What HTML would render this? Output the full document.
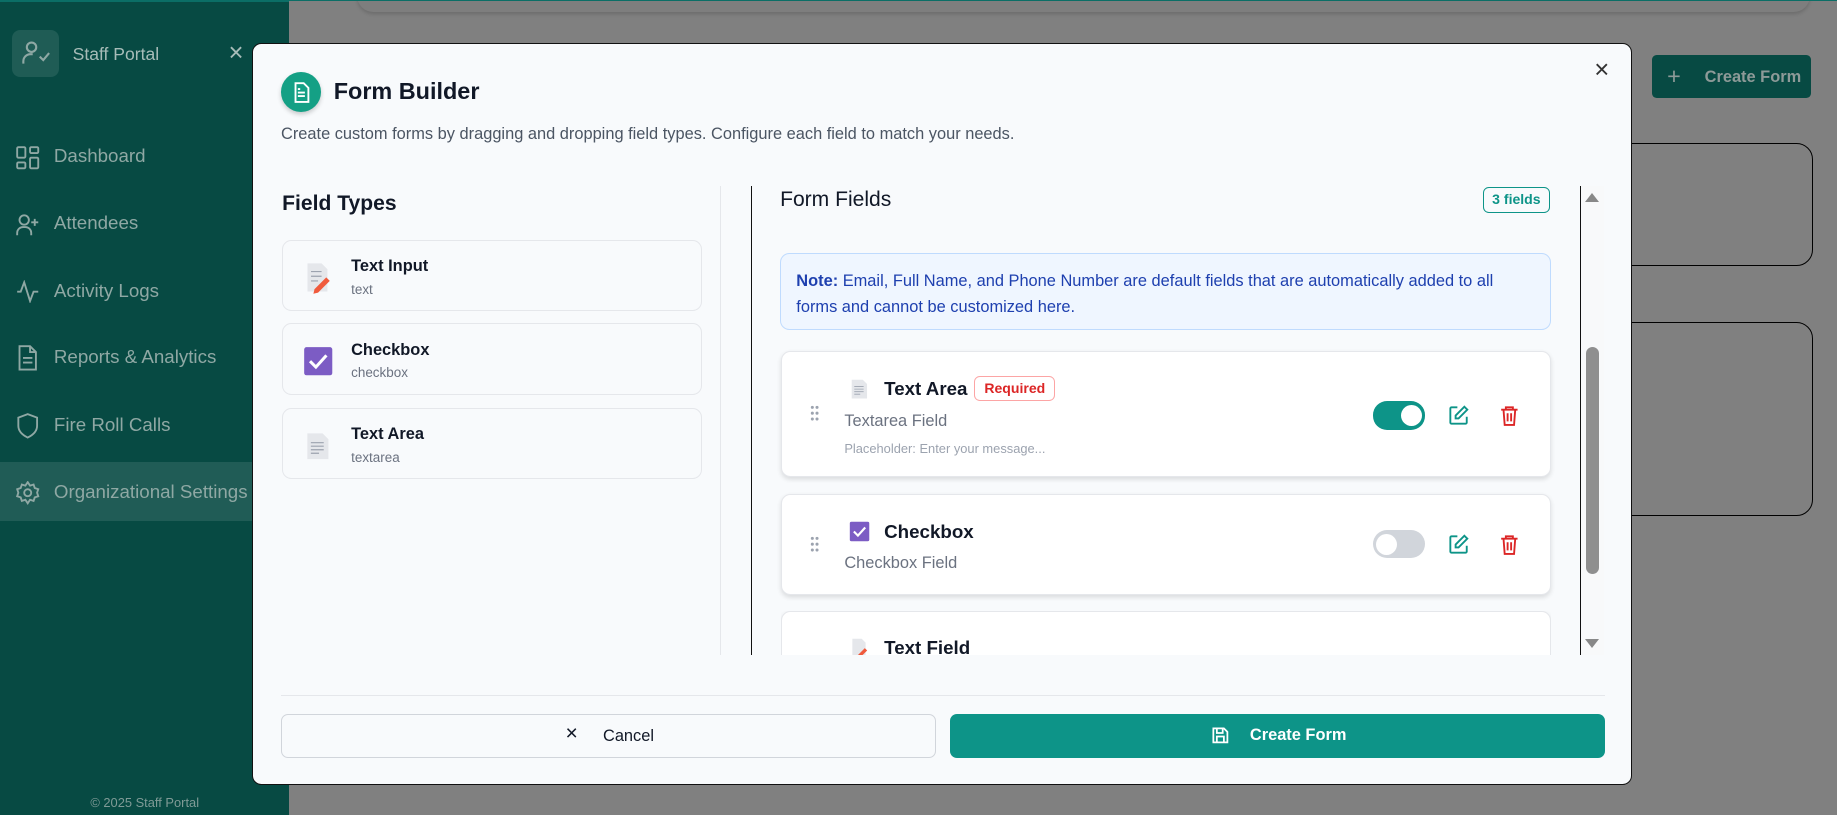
<!DOCTYPE html>
<html><head><meta charset="utf-8"><style>
html,body{margin:0;padding:0;overflow:hidden}
body{width:1837px;height:815px;background:#808080;font-family:"Liberation Sans",sans-serif}
#w{zoom:1.17156;width:1568px;height:696px;position:relative;overflow:hidden}
.a{position:absolute}
.side{left:0;top:0;width:247px;height:696px;background:#074a43;border-top:2px solid #0b6e66;box-sizing:border-box}
.nav{position:absolute;left:46px;color:#8fa8a4;font-size:16px}
.ni{position:absolute;left:14px}
.bgcard{border:1px solid #000;border-radius:14px;background:#808080}
.modal{left:215px;top:37px;width:1178px;height:633px;background:#f8fafc;border:1px solid #111;border-radius:8px;box-sizing:border-box}
.ft{position:absolute;left:25px;width:358px;height:61px;border:1px solid #e5e7eb;border-radius:8px;background:#f8fafc;box-sizing:border-box}
.ft b{position:absolute;left:58px;top:14px;font-size:14px;color:#111827}
.ft span{position:absolute;left:58px;top:35px;font-size:11.5px;color:#6b7280}
.fc{position:absolute;left:451px;width:657px;background:#fff;border:1px solid #e5e7eb;border-radius:8px;box-shadow:0 2px 4px rgba(0,0,0,.12);box-sizing:border-box}
.tog{position:absolute;width:45px;height:24px;border-radius:12px}
.knob{position:absolute;top:3px;width:18px;height:18px;border-radius:50%;background:#fff}
</style></head><body><div id="w">
<!-- background page -->
<div class="a" style="left:305px;top:-20px;width:1240px;height:30px;border-radius:14px;background:#7e7e7e;box-shadow:0 2px 3px rgba(0,0,0,.15)"></div>
<div class="a" style="left:247px;top:0;width:1321px;height:1px;background:#0b6e66"></div>
<div class="a" style="left:1410px;top:47px;width:136px;height:37px;background:#074a43;border-radius:4px;color:#8d9a98;font-size:14px;font-weight:bold">
<span class="a" style="left:13px;top:7px;font-size:20px;font-weight:normal">+</span><span class="a" style="left:45px;top:11px">Create Form</span></div>
<div class="a bgcard" style="left:1330px;top:122px;width:216px;height:103px"></div>
<div class="a bgcard" style="left:1330px;top:275px;width:216px;height:164px"></div>
<!-- sidebar -->
<div class="a side">
<div class="a" style="left:10px;top:24px;width:40px;height:40px;border-radius:7px;background:#1f5c55"></div>
<svg class="a" style="left:18px;top:32px" width="26" height="24" viewBox="0 0 26 24" fill="none" stroke="#8fa8a4" stroke-width="1.8"><circle cx="9" cy="7" r="4"/><path d="M2 21v-2a6 6 0 0 1 6-6h2M16 15l3 3 5-6"/></svg>
<div class="a" style="left:62px;top:36px;color:#a7bcb8;font-size:15px">Staff Portal</div>
<div class="a" style="left:195px;top:32px;color:#a7bcb8;font-size:22px">×</div>
<div class="a" style="left:0;top:393px;width:247px;height:50px;background:#205c56"></div>
<svg class="ni" style="top:123px" width="20" height="20" viewBox="0 0 20 20" fill="none" stroke="#8fa8a4" stroke-width="1.6"><rect x="1" y="1" width="7" height="9" rx="1"/><rect x="12" y="1" width="7" height="5" rx="1"/><rect x="12" y="10" width="7" height="9" rx="1"/><rect x="1" y="14" width="7" height="5" rx="1"/></svg>
<div class="nav" style="top:122px">Dashboard</div>
<svg class="ni" style="top:180px" width="20" height="20" viewBox="0 0 20 20" fill="none" stroke="#8fa8a4" stroke-width="1.6"><circle cx="7" cy="6" r="4"/><path d="M1 19v-2a5 5 0 0 1 5-5h2a5 5 0 0 1 5 5v2M16 5v6M13 8h6"/></svg>
<div class="nav" style="top:179px">Attendees</div>
<svg class="ni" style="top:237px" width="20" height="20" viewBox="0 0 20 20" fill="none" stroke="#8fa8a4" stroke-width="1.6"><path d="M1 10h3l3-8 5 16 3-8h4"/></svg>
<div class="nav" style="top:237px">Activity Logs</div>
<svg class="ni" style="top:293px" width="20" height="22" viewBox="0 0 20 22" fill="none" stroke="#8fa8a4" stroke-width="1.6"><path d="M3 1h9l5 5v15H3zM12 1v5h5M6 11h8M6 15h8"/></svg>
<div class="nav" style="top:294px">Reports &amp; Analytics</div>
<svg class="ni" style="top:351px" width="20" height="22" viewBox="0 0 20 22" fill="none" stroke="#8fa8a4" stroke-width="1.6"><path d="M10 1l8 3v7c0 5-4 8-8 10-4-2-8-5-8-10V4z"/></svg>
<div class="nav" style="top:352px">Fire Roll Calls</div>
<svg class="ni" style="top:409px" width="20" height="20" viewBox="0 0 20 20" fill="none" stroke="#8fa8a4" stroke-width="1.6"><circle cx="10" cy="10" r="3"/><path d="M10 1l2 3 3-1 1 3 3 1-1 3 1 3-3 1-1 3-3-1-2 3-2-3-3 1-1-3-3-1 1-3-1-3 3-1 1-3 3 1z"/></svg>
<div class="nav" style="top:409px;white-space:nowrap">Organizational Settings</div>
<div class="a" style="left:0;width:247px;top:677px;text-align:center;color:#7f9a96;font-size:11px">© 2025 Staff Portal</div>
</div>
<!-- modal -->
<div class="a modal">
<div class="a" style="left:1145px;top:10px;font-size:22px;color:#333">×</div>
<div class="a" style="left:24px;top:24px;width:34px;height:34px;border-radius:50%;background:#14a085;box-shadow:0 2px 4px rgba(0,0,0,.2)"></div>
<svg class="a" style="left:33px;top:32px" width="16" height="18" viewBox="0 0 16 18" fill="none" stroke="#fff" stroke-width="1.6"><path d="M3 1h7l4 4v12H3zM5 9h6M5 12h6M5 6h2"/></svg>
<div class="a" style="left:69px;top:29px;font-size:20px;font-weight:bold;color:#111827">Form Builder</div>
<div class="a" style="left:24px;top:69px;font-size:14px;color:#4b5563">Create custom forms by dragging and dropping field types. Configure each field to match your needs.</div>
<div class="a" style="left:25px;top:126px;font-size:18px;font-weight:bold;color:#111827">Field Types</div>
<div class="ft" style="top:167px"><svg class="a" style="left:18px;top:17px" width="24" height="28" viewBox="0 0 24 28"><path d="M3 2h12l5 5v19H3z" fill="#e5e7eb"/><path d="M6 9h9M6 13h9M6 17h6" stroke="#9ca3af"/><path d="M9 24l10-10 3 3-10 10-4 1z" fill="#f05a3c"/></svg><b>Text Input</b><span>text</span></div>
<div class="ft" style="top:238px"><svg class="a" style="left:17px;top:19px" width="26" height="26" viewBox="0 0 26 26"><rect x="1" y="1" width="24" height="24" rx="2" fill="#7c5cc4"/><path d="M6 13l5 5 9-10" stroke="#fff" stroke-width="2.6" fill="none"/></svg><b>Checkbox</b><span>checkbox</span></div>
<div class="ft" style="top:310px"><svg class="a" style="left:19px;top:19px" width="22" height="26" viewBox="0 0 22 26"><path d="M2 2h13l5 5v17H2z" fill="#e5e7eb"/><path d="M5 10h11M5 13h11M5 16h11M5 19h7" stroke="#9ca3af"/></svg><b>Text Area</b><span>textarea</span></div>
<div class="a" style="left:399px;top:121px;width:1px;height:400px;background:#e5e7eb"></div>
<div class="a" style="left:425px;top:121px;width:1px;height:400px;background:#111"></div>
<div class="a" style="left:1133px;top:121px;width:1px;height:400px;background:#111"></div>
<div class="a" style="left:1134px;top:121px;width:19px;height:400px;background:#f8f9fa"></div>
<div class="a" style="left:1137px;top:127px;width:0;height:0;border-left:6px solid transparent;border-right:6px solid transparent;border-bottom:8px solid #888"></div>
<div class="a" style="left:1137px;top:508px;width:0;height:0;border-left:6px solid transparent;border-right:6px solid transparent;border-top:8px solid #888"></div>
<div class="a" style="left:1138px;top:258px;width:11px;height:194px;border-radius:6px;background:#8f8f8f"></div>
<div class="a" style="left:450px;top:123px;font-size:18px;color:#111827">Form Fields</div>
<div class="a" style="left:1050px;top:122px;width:57px;height:22px;border:1px solid #0d9488;border-radius:5px;box-sizing:border-box;color:#0d9488;font-size:12px;font-weight:bold;text-align:center;line-height:20px">3 fields</div>
<div class="a" style="left:450px;top:178px;width:658px;height:66px;background:#eff6ff;border:1px solid #bfdbfe;border-radius:8px;box-sizing:border-box;padding:13px 13px;color:#1e40af;font-size:14px;line-height:22px"><b>Note:</b> Email, Full Name, and Phone Number are default fields that are automatically added to all forms and cannot be customized here.</div>
<div class="fc" style="top:262px;height:107px">
<svg class="a" style="left:24px;top:45px" width="8" height="14" viewBox="0 0 8 14" fill="#9ca3af"><circle cx="2" cy="2" r="1.3"/><circle cx="6" cy="2" r="1.3"/><circle cx="2" cy="7" r="1.3"/><circle cx="6" cy="7" r="1.3"/><circle cx="2" cy="12" r="1.3"/><circle cx="6" cy="12" r="1.3"/></svg>
<svg class="a" style="left:58px;top:22px" width="16" height="19" viewBox="0 0 22 26"><path d="M2 2h13l5 5v17H2z" fill="#e5e7eb"/><path d="M5 10h11M5 13h11M5 16h11M5 19h7" stroke="#9ca3af"/></svg>
<div class="a" style="left:87px;top:22px;font-size:16px;font-weight:bold;color:#111827">Text Area</div>
<div class="a" style="left:164px;top:20px;width:69px;height:22px;border:1px solid #fca5a5;border-radius:5px;box-sizing:border-box;color:#dc2626;font-size:12px;font-weight:bold;text-align:center;line-height:20px">Required</div>
<div class="a" style="left:53px;top:51px;font-size:14px;color:#6b7280">Textarea Field</div>
<div class="a" style="left:53px;top:76px;font-size:11px;color:#9ca3af">Placeholder: Enter your message...</div>
<div class="tog" style="left:504px;top:42px;background:#0d9488"><div class="knob" style="left:24px"></div></div>
<svg class="a" style="left:568px;top:45px" width="18" height="18" viewBox="0 0 18 18" fill="none" stroke="#0d9488" stroke-width="1.6"><path d="M8 2H3a1 1 0 0 0-1 1v12a1 1 0 0 0 1 1h12a1 1 0 0 0 1-1v-5"/><path d="M14 1.5l2.5 2.5L9 11.5H6.5V9z"/></svg>
<svg class="a" style="left:613px;top:45px" width="16" height="18" viewBox="0 0 16 18" fill="none" stroke="#dc2626" stroke-width="1.6"><path d="M1 4h14M5 4V2h6v2M3 4l1 13h8l1-13M6.5 7v7M9.5 7v7"/></svg>
</div>
<div class="fc" style="top:384px;height:86px">
<svg class="a" style="left:24px;top:35px" width="8" height="14" viewBox="0 0 8 14" fill="#9ca3af"><circle cx="2" cy="2" r="1.3"/><circle cx="6" cy="2" r="1.3"/><circle cx="2" cy="7" r="1.3"/><circle cx="6" cy="7" r="1.3"/><circle cx="2" cy="12" r="1.3"/><circle cx="6" cy="12" r="1.3"/></svg>
<svg class="a" style="left:57px;top:22px" width="18" height="18" viewBox="0 0 26 26"><rect x="1" y="1" width="24" height="24" rx="2" fill="#7c5cc4"/><path d="M6 13l5 5 9-10" stroke="#fff" stroke-width="2.6" fill="none"/></svg>
<div class="a" style="left:87px;top:22px;font-size:16px;font-weight:bold;color:#111827">Checkbox</div>
<div class="a" style="left:53px;top:50px;font-size:14px;color:#6b7280">Checkbox Field</div>
<div class="tog" style="left:504px;top:30px;background:#d1d5db"><div class="knob" style="left:3px"></div></div>
<svg class="a" style="left:568px;top:33px" width="18" height="18" viewBox="0 0 18 18" fill="none" stroke="#0d9488" stroke-width="1.6"><path d="M8 2H3a1 1 0 0 0-1 1v12a1 1 0 0 0 1 1h12a1 1 0 0 0 1-1v-5"/><path d="M14 1.5l2.5 2.5L9 11.5H6.5V9z"/></svg>
<svg class="a" style="left:613px;top:33px" width="16" height="18" viewBox="0 0 16 18" fill="none" stroke="#dc2626" stroke-width="1.6"><path d="M1 4h14M5 4V2h6v2M3 4l1 13h8l1-13M6.5 7v7M9.5 7v7"/></svg>
</div>
<div class="a" style="left:451px;top:484px;width:657px;height:37px;overflow:hidden">
<div class="fc" style="left:0;top:0;height:80px">
<svg class="a" style="left:58px;top:21px" width="16" height="19" viewBox="0 0 24 28"><path d="M3 2h12l5 5v19H3z" fill="#e5e7eb"/><path d="M9 24l10-10 3 3-10 10-4 1z" fill="#f05a3c"/></svg>
<div class="a" style="left:87px;top:21px;font-size:16px;font-weight:bold;color:#111827">Text Field</div>
</div></div>
<div class="a" style="left:24px;top:555px;width:1130px;height:1px;background:#e5e7eb"></div>
<div class="a" style="left:24px;top:572px;width:559px;height:37px;border:1px solid #d1d5db;border-radius:6px;background:#f8fafc;box-sizing:border-box;font-size:14px;color:#111827">
<span class="a" style="left:242px;top:6px;font-size:18px">×</span><span class="a" style="left:274px;top:10px">Cancel</span></div>
<div class="a" style="left:595px;top:572px;width:559px;height:37px;border-radius:6px;background:#0d9488;font-size:14px;font-weight:bold;color:#fff">
<svg class="a" style="left:223px;top:10px" width="16" height="16" viewBox="0 0 16 16" fill="none" stroke="#fff" stroke-width="1.5"><path d="M2 2h9l3 3v9H2zM5 2v4h5V2M5 14V9h6v5"/></svg>
<span class="a" style="left:256px;top:10px">Create Form</span></div>
</div>
</div></body></html>
